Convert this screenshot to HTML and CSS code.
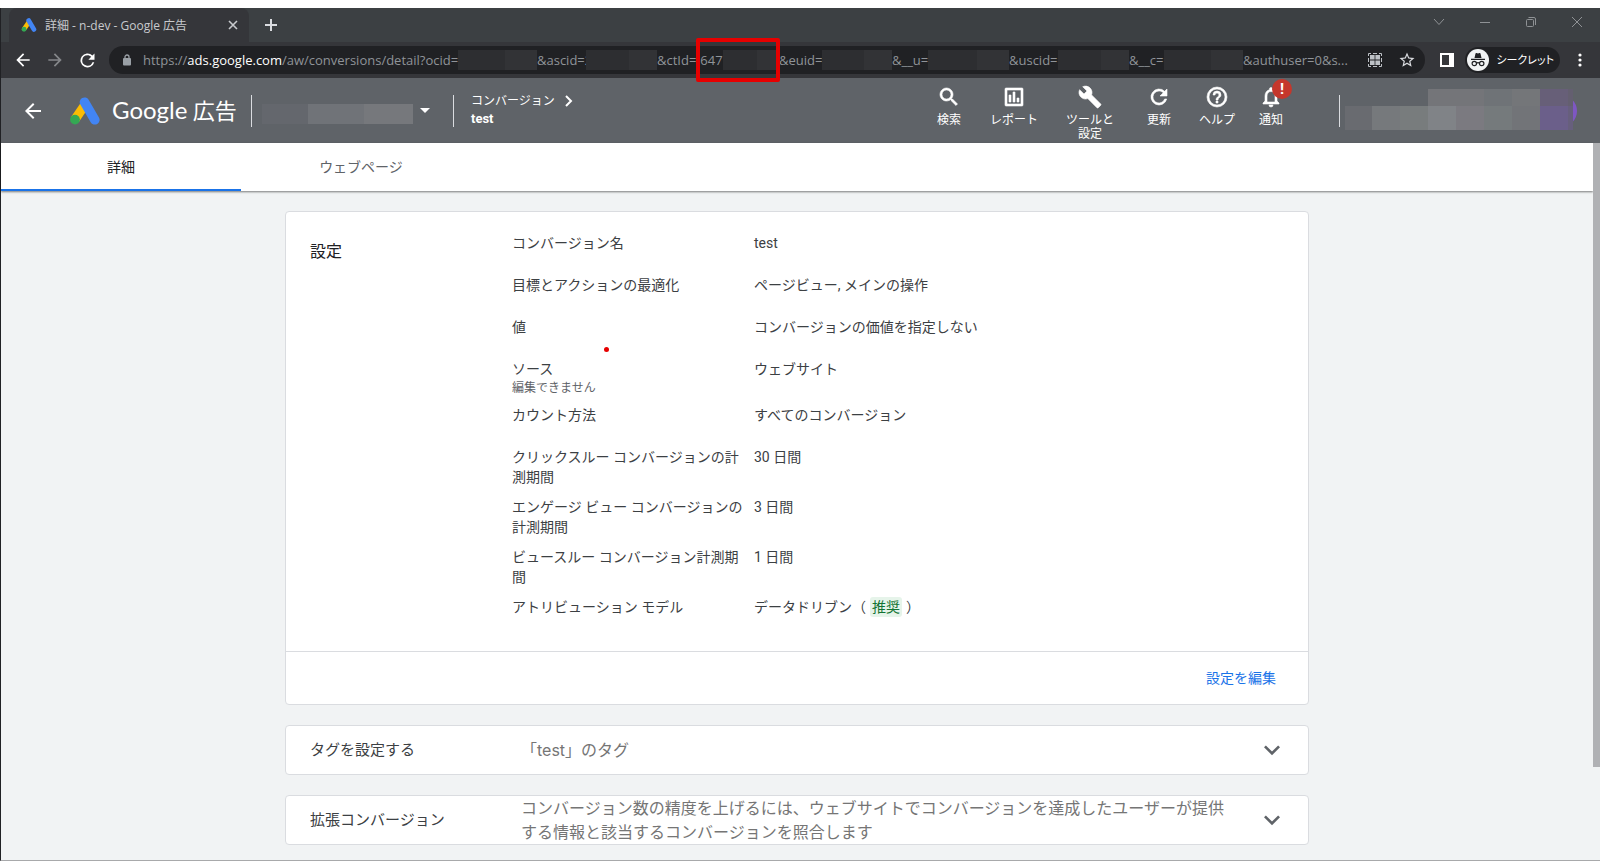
FILE: index.html
```html
<!DOCTYPE html>
<html lang="ja">
<head>
<meta charset="utf-8">
<title>詳細 - n-dev - Google 広告</title>
<link rel="stylesheet" href="styles.css">
</head>
<body>
<svg class="defs" aria-hidden="true">
  <symbol id="ads" viewBox="0 0 30 28">
    <path d="M11 5.500 19 10 9.200 24.500 1 20z" fill="#fbbc04"/>
    <path d="M14.500 5.200 24.800 22.800" stroke="#4285f4" stroke-width="9.600" stroke-linecap="round"/>
    <circle cx="5" cy="22.600" r="4.900" fill="#34a853"/>
  </symbol>
  <symbol id="back" viewBox="0 0 24 24"><path d="M20 11H7.830l5.590-5.590L12 4l-8 8 8 8 1.410-1.410L7.830 13H20z"/></symbol>
  <symbol id="reload" viewBox="0 0 24 24"><path d="M17.650 6.350A8 8 0 1 0 19.730 14h-2.080A6 6 0 1 1 12 6c1.660 0 3.140.690 4.220 1.780L13 11h7V4z"/></symbol>
  <symbol id="down" viewBox="0 0 24 24"><path d="M7.410 8.590 12 13.170l4.590-4.580L18 10l-6 6-6-6z"/></symbol>
</svg>
<div class="window">
  <div class="tabstrip">
    <div class="browser-tab">
      <svg class="favicon"><use href="#ads"/></svg>
      <span class="browser-tab-title">詳細 - n-dev - Google 広告</span>
      <button class="icon-button" aria-label="タブを閉じる"><svg width="10" height="10" viewBox="0 0 10 10"><path d="M1 1l8 8M9 1L1 9" stroke="#c8cacd" stroke-width="1.600"/></svg></button>
    </div>
    <button class="icon-button new-tab" aria-label="新しいタブ"><svg width="12" height="12" viewBox="0 0 12 12"><path d="M6 0v12M0 6h12" stroke="#dadce0" stroke-width="2"/></svg></button>
    <div class="window-controls">
      <button class="icon-button" aria-label="タブを検索"><svg width="12" height="12" viewBox="0 0 12 12"><path d="M1 3l5 5.500L11 3"/></svg></button>
      <button class="icon-button" aria-label="最小化"><svg width="12" height="12" viewBox="0 0 12 12"><path d="M1 6.500h10"/></svg></button>
      <button class="icon-button" aria-label="元に戻す"><svg width="12" height="12" viewBox="0 0 12 12"><rect x="1.500" y="3.500" width="7" height="7" rx="1"/><path d="M3.500 1.500H9a1.500 1.500 0 0 1 1.500 1.500v6"/></svg></button>
      <button class="icon-button" aria-label="閉じる"><svg width="12" height="12" viewBox="0 0 12 12"><path d="M1 1l10 10M11 1L1 11"/></svg></button>
    </div>
  </div>

  <div class="toolbar">
    <div class="history">
      <button class="icon-button" aria-label="戻る"><svg width="20" height="20"><use href="#back"/></svg></button>
      <button class="icon-button forward" aria-label="進む"><svg width="20" height="20"><use href="#back"/></svg></button>
      <button class="icon-button" aria-label="再読み込み"><svg width="21" height="21"><use href="#reload"/></svg></button>
    </div>
    <div class="omnibox">
      <svg class="lock" width="10" height="13" viewBox="0 0 10 13"><rect x="1" y="4" width="8" height="7.500" rx="1"/><path d="M3 5V3a2 2 0 0 1 4 0v2" fill="none" stroke="#9aa0a6" stroke-width="1.300"/></svg>
      <div class="url">
        <span class="part part-host"><span>https://<b>ads.google.com</b>/aw/conversions/detail?ocid=</span><i class="mask"></i></span>
        <span class="part part-ascid"><span>&amp;ascid=2</span><i class="mask mask-over"></i></span>
        <span class="part part-ctid"><span>&amp;ctId=</span><span class="ctid-value">647</span><i class="mask"></i><i class="callout"></i></span>
        <span class="part part-euid"><span>&amp;euid=</span><i class="mask"></i></span>
        <span class="part part-u"><span>&amp;__u=</span><i class="mask"></i></span>
        <span class="part part-uscid"><span>&amp;uscid=</span><i class="mask"></i></span>
        <span class="part part-c"><span>&amp;__c=</span><i class="mask"></i></span>
        <span class="part">&amp;authuser=0&amp;s...</span>
      </div>
      <button class="icon-button" aria-label="QR コード"><svg width="14" height="14" viewBox="0 0 14 14"><path d="M.5 3V.5H3M5 .5h4M11 .5h2.500V3M13.500 5v4M13.500 11v2.500H11M9 13.500H5M3 13.500H.5V11M.5 9V5" fill="none" stroke="#bdc1c6"/><path d="M2 2h4.600v4.600H2zM7.400 2H12v4.600H7.400zM2 7.400h4.600V12H2zM7.400 7.400H12V12H7.400z" fill="#bdc1c6"/></svg></button>
      <button class="icon-button" aria-label="ブックマーク"><svg width="18" height="18" viewBox="0 0 24 24" fill="#dadce0"><path d="M22 9.240l-7.190-.620L12 2 9.190 8.630 2 9.240l5.460 4.730L5.820 21 12 17.270 18.180 21l-1.630-7.030zM12 15.400l-3.760 2.270 1-4.280-3.320-2.880 4.380-.380L12 6.100l1.710 4.040 4.380.380-3.320 2.880 1 4.280z"/></svg></button>
    </div>
    <button class="icon-button side-panel" aria-label="サイドパネル"><svg width="14" height="14" viewBox="0 0 14 14"><path fill="#fff" fill-rule="evenodd" d="M0 0h14v14H0zM2 2v10h7V2z"/></svg></button>
    <button class="incognito">
      <svg width="22" height="22" viewBox="0 0 22 22"><circle cx="11" cy="11" r="11" fill="#f1f3f4"/><g fill="#202124"><path d="M7.500 9l1-4.500q.3-.7 1-.4L11 4.600l1.500-.5q.7-.3 1 .4l1 4.500zM4 9.800h14V11H4z"/></g><g fill="none" stroke="#202124" stroke-width="1.200"><circle cx="7.300" cy="14.500" r="2.200"/><circle cx="14.700" cy="14.500" r="2.200"/><path d="M9.500 14.200q1.500-1 3 0"/></g></svg>
      <span>シークレット</span>
    </button>
    <button class="icon-button menu" aria-label="メニュー"><svg width="4" height="14" viewBox="0 0 4 14" fill="#fff"><circle cx="2" cy="2" r="1.600"/><circle cx="2" cy="7" r="1.600"/><circle cx="2" cy="12" r="1.600"/></svg></button>
  </div>

  <header class="app-bar">
    <button class="icon-button app-back" aria-label="戻る"><svg width="24" height="24"><use href="#back"/></svg></button>
    <svg class="logo"><use href="#ads"/></svg>
    <div class="brand"><span class="brand-name">Google</span> 広告</div>
    <i class="divider"></i>
    <button class="account-picker" aria-label="アカウント"><i class="account-mask"></i><svg width="10" height="5" viewBox="0 0 10 5"><path d="M0 0h10L5 5z" fill="#fff"/></svg></button>
    <i class="divider"></i>
    <nav class="breadcrumb">
      <a href="#">コンバージョン<svg width="8" height="12" viewBox="0 0 8 12"><path d="M1 1l5 5-5 5" fill="none" stroke="#fff" stroke-width="2"/></svg></a>
      <strong>test</strong>
    </nav>
    <div class="tools">
      <button class="tool"><svg width="24" height="24" viewBox="0 0 24 24"><path d="M15.500 14h-.790l-.280-.270a6.500 6.500 0 1 0-.700.700l.270.280v.790l5 4.990L20.490 19zm-6 0a4.500 4.500 0 1 1 0-9 4.500 4.500 0 0 1 0 9z"/></svg><span>検索</span></button>
      <button class="tool"><svg width="24" height="24" viewBox="0 0 24 24"><path fill-rule="evenodd" d="M4 3h16q1 0 1 1v16q0 1-1 1H4q-1 0-1-1V4q0-1 1-1zM5 5v14h14V5zM7 10h2v7H7zM11 7h2v10h-2zM15 13h2v4h-2z"/></svg><span>レポート</span></button>
      <button class="tool"><svg width="24" height="24" viewBox="0 0 24 24"><path d="M22.700 19l-9.100-9.100c.9-2.300.4-5-1.500-6.900-2-2-5-2.400-7.400-1.300L9 6 6 9 1.600 4.700C.4 7.100.9 10.100 2.900 12.100c1.900 1.900 4.600 2.400 6.900 1.500l9.100 9.100c.4.4 1 .4 1.400 0l2.300-2.300c.5-.4.5-1.100.1-1.400z"/></svg><span>ツールと<br>設定</span></button>
      <button class="tool"><svg width="24" height="24"><use href="#reload"/></svg><span>更新</span></button>
      <button class="tool"><svg width="24" height="24" viewBox="0 0 24 24"><path d="M11 18h2v-2h-2zm1-16a10 10 0 1 0 0 20 10 10 0 0 0 0-20zm0 18a8 8 0 1 1 0-16 8 8 0 0 1 0 16zm0-14a4 4 0 0 0-4 4h2a2 2 0 1 1 4 0c0 2-3 1.750-3 5h2c0-2.250 3-2.500 3-5a4 4 0 0 0-4-4z"/></svg><span>ヘルプ</span></button>
      <button class="tool"><svg width="24" height="24" viewBox="0 0 24 24"><path d="M12 22a2 2 0 0 0 2-2h-4a2 2 0 0 0 2 2zm6-6v-5c0-3.070-1.630-5.640-4.500-6.320V4a1.500 1.500 0 0 0-3 0v.680C7.640 5.360 6 7.920 6 11v5l-2 2v1h16v-1zm-2 1H8v-6c0-2.480 1.510-4.500 4-4.500s4 2.020 4 4.500z"/></svg><span>通知</span><b class="badge">!</b></button>
    </div>
    <i class="divider profile-divider"></i>
    <svg class="profile" width="232" height="42" viewBox="0 0 232 42">
      <circle cx="216" cy="22" r="16" fill="#7e57c2"/>
      <path fill="#747579" d="M83 0h56v17H83z"/><path fill="#6f7377" d="M139 0h28v17h-28z"/><path fill="#747679" d="M167 0h28v17h-28z"/><path fill="#675f78" d="M195 0h28v17h-28z"/><path fill="#645f70" d="M223 0h5v17h-5z"/>
      <path fill="#696b70" d="M0 17h27v24H0z"/><path fill="#76797c" d="M27 17h28v24H27z"/><path fill="#787c7d" d="M55 17h28v24H55z"/><path fill="#808387" d="M83 17h28v24H83z"/><path fill="#7b7a80" d="M111 17h28v24h-28z"/><path fill="#757a7c" d="M139 17h28v24h-28z"/><path fill="#727478" d="M167 17h28v24h-28z"/><path fill="#6b5f8a" d="M195 17h28v24h-28z"/><path fill="#675f7d" d="M223 17h5v24h-5z"/>
    </svg>
  </header>

  <div class="viewport">
    <div class="page">
      <nav class="tabs">
        <a class="tab tab-active" href="#">詳細</a>
        <a class="tab" href="#">ウェブページ</a>
      </nav>
      <main class="content">
        <section class="card">
          <div class="settings">
            <h2 class="settings-title">設定</h2>
            <dl class="fields">
              <div class="field"><dt>コンバージョン名</dt><dd>test</dd></div>
              <div class="field"><dt>目標とアクションの最適化</dt><dd>ページビュー, メインの操作</dd></div>
              <div class="field"><dt>値<i class="marker"></i></dt><dd>コンバージョンの価値を指定しない</dd></div>
              <div class="field"><dt>ソース<small>編集できません</small></dt><dd>ウェブサイト</dd></div>
              <div class="field"><dt>カウント方法</dt><dd>すべてのコンバージョン</dd></div>
              <div class="field"><dt>クリックスルー コンバージョンの計測期間</dt><dd>30 日間</dd></div>
              <div class="field"><dt>エンゲージ ビュー コンバージョンの計測期間</dt><dd>3 日間</dd></div>
              <div class="field"><dt>ビュースルー コンバージョン計測期間</dt><dd>1 日間</dd></div>
              <div class="field"><dt>アトリビューション モデル</dt><dd>データドリブン（<span class="chip">推奨</span>）</dd></div>
            </dl>
          </div>
          <div class="card-actions"><button class="link-button">設定を編集</button></div>
        </section>
        <section class="card expander">
          <h2 class="expander-title">タグを設定する</h2>
          <p class="expander-text">「test」のタグ</p>
          <button class="icon-button" aria-label="タグを設定するを開く"><svg width="32" height="32"><use href="#down"/></svg></button>
        </section>
        <section class="card expander">
          <h2 class="expander-title">拡張コンバージョン</h2>
          <p class="expander-text">コンバージョン数の精度を上げるには、ウェブサイトでコンバージョンを達成したユーザーが提供する情報と該当するコンバージョンを照合します</p>
          <button class="icon-button" aria-label="拡張コンバージョンを開く"><svg width="32" height="32"><use href="#down"/></svg></button>
        </section>
      </main>
    </div>
    <div class="scrollbar"><div class="scrollbar-thumb"></div></div>
  </div>
</div>
</body>
</html>
```

FILE: styles.css
```css
* { box-sizing: border-box; }

body {
  margin: 0;
  padding-top: 8px;
  min-height: 100vh;
  display: flex;
  background: #fff;
  color: #3c4043;
  font: 14px/20px Roboto, "Noto Sans CJK JP", sans-serif;
}

h2, p, dl, dd { margin: 0; font-weight: 400; }
a { color: inherit; text-decoration: none; }
button { border: 0; padding: 0; background: none; color: inherit; font: inherit; }
svg { display: block; flex: none; }
.defs { position: absolute; width: 0; height: 0; }

.window {
  flex: 1;
  min-width: 0;
  display: flex;
  flex-direction: column;
  border-left: 1px solid #202124;
  border-bottom: 1px solid #a8a9ab;
}

.icon-button {
  flex: none;
  width: 32px;
  height: 28px;
  display: flex;
  align-items: center;
  justify-content: center;
}

/* Browser chrome */
.tabstrip {
  display: flex;
  align-items: center;
  height: 34px;
  padding-left: 8px;
  background: #3c4043;
  font: 12px/16px "Open Sans", "Noto Sans CJK JP", sans-serif;
}
.browser-tab {
  width: 240px;
  height: 34px;
  padding-left: 12px;
  display: flex;
  align-items: center;
  border-radius: 8px 8px 0 0;
  background: #35363a;
  color: #c8cacd;
}
.favicon { width: 16px; height: 14px; margin-right: 8px; }
.browser-tab-title { flex: 1; padding-top: 2px; white-space: nowrap; }
.new-tab { margin-left: 6px; }
.window-controls {
  margin-left: auto;
  display: flex;
  height: 34px;
}
.window-controls .icon-button { width: 46px; }
.window-controls svg { fill: none; stroke: #8f9295; }

.toolbar {
  display: flex;
  align-items: center;
  height: 36px;
  background: #35363a;
  color: #fff;
  font: 13px/20px "Open Sans", "Noto Sans CJK JP", sans-serif;
}
.history { display: flex; padding: 0 6px; fill: #fff; }
.forward { fill: #85878a; transform: scaleX(-1); }
.omnibox {
  flex: 1;
  min-width: 0;
  height: 28px;
  padding: 0 2px 0 13px;
  display: flex;
  align-items: center;
  border-radius: 14px;
  background: #202124;
}
.lock { fill: #9aa0a6; margin-right: 11px; }
.url {
  flex: 1;
  min-width: 0;
  display: flex;
  color: #8f9398;
  white-space: nowrap;
}
.url b { color: #fff; font-weight: 400; }
.part { position: relative; display: flex; align-items: center; flex: none; }
.part-host { width: 394px; }
.part-ascid { width: 120px; }
.part-ctid { width: 122px; }
.part-euid { width: 113px; }
.part-u { width: 117px; }
.part-uscid { width: 120px; }
.part-c { width: 114px; }
.ctid-value { margin-left: 4px; }
.mask {
  flex: 1;
  height: 20px;
  background: linear-gradient(90deg, #2d2e31 60%, #323336 60%);
}
.mask-over { position: relative; margin-left: -6px; }
.callout {
  position: absolute;
  top: -12px;
  left: 39px;
  width: 84px;
  height: 44px;
  border: 4px solid #e60000;
  border-radius: 2px;
  z-index: 1;
}
.side-panel { margin-left: 6px; }
.incognito {
  flex: none;
  height: 26px;
  margin-left: 2px;
  padding: 0 6px 0 2px;
  display: flex;
  align-items: center;
  gap: 7px;
  border-radius: 13px;
  background: #202124;
  font-size: 11px;
  line-height: 16px;
  font-feature-settings: "palt";
}
.incognito span { min-width: 56px; white-space: nowrap; }
.menu { width: 40px; }

/* Application header */
.app-bar {
  display: flex;
  align-items: center;
  min-height: 65px;
  padding-right: 23px;
  background: #5f6368;
  color: #fff;
  fill: #fff;
}
.app-back { width: 64px; }
.logo { width: 30px; height: 28px; margin: 0 12px 0 5px; }
.brand { width: 139px; font-size: 22px; line-height: 32px; white-space: nowrap; }
.brand-name { font-family: Lato, sans-serif; font-size: 24px; }
.divider { flex: none; width: 1px; height: 32px; background: #dadce0; }
.account-picker { width: 201px; padding-left: 10px; display: flex; align-items: center; gap: 7px; }
.account-mask {
  width: 151px;
  height: 20px;
  margin-top: 6px;
  background: linear-gradient(90deg, #64676d 46px, #707378 46px 102px, #76787c 102px);
}
.breadcrumb {
  padding: 0 0 2px 17px;
  display: flex;
  flex-direction: column;
  font-size: 12px;
  line-height: 18px;
}
.breadcrumb a { display: flex; align-items: center; gap: 10px; }
.breadcrumb strong { font-size: 13px; }
.tools {
  margin-left: auto;
  display: grid;
  grid-template-columns: 66px 64px 88px 50px 66px 42px;
  align-self: flex-start;
  padding-top: 7px;
  font-size: 12px;
  line-height: 14px;
}
.tool {
  position: relative;
  display: flex;
  flex-direction: column;
  align-items: center;
  gap: 4px;
}
.tool svg { stroke: #fff; stroke-width: 0.6; }
.badge {
  position: absolute;
  top: -6px;
  right: 0;
  width: 20px;
  height: 20px;
  border-radius: 50%;
  background: #c5372c;
  font-size: 15px;
  line-height: 20px;
  text-align: center;
}
.profile-divider { margin: 0 5px 0 47px; }
.profile { margin-bottom: 2px; }

/* Page */
.viewport { flex: 1; display: flex; background: #f1f3f4; }
.page { flex: 1; min-width: 0; }
.scrollbar { width: 7px; }
.scrollbar-thumb { height: 87%; background: #b0b1b4; }

.tabs {
  display: flex;
  background: #fff;
  box-shadow: 0 1px 2px rgba(0, 0, 0, 0.5);
}
.tab {
  width: 240px;
  height: 48px;
  padding-top: 14px;
  text-align: center;
  color: #5f6368;
}
.tab-active { color: #202124; border-bottom: 2px solid #1a73e8; }

.content {
  max-width: 1024px;
  margin: 0 auto;
  padding: 20px 0 14px;
  display: flex;
  flex-direction: column;
  gap: 20px;
}
.card { background: #fff; border: 1px solid #dadce0; border-radius: 4px; }
.settings { display: flex; padding: 21px 24px 12px; }
.settings-title {
  width: 202px;
  padding-top: 7px;
  color: #202124;
  font-size: 16px;
  line-height: 24px;
}
.fields { flex: 1; }
.field {
  display: grid;
  grid-template-columns: 242px 1fr;
  min-height: 42px;
  padding-bottom: 10px;
}
.field dt { position: relative; padding-right: 4px; }
.field small {
  display: block;
  margin-bottom: -2px;
  font-size: 12px;
  line-height: 18px;
  color: #5f6368;
}
.marker {
  position: absolute;
  top: 30px;
  left: 92px;
  width: 5px;
  height: 5px;
  border-radius: 50%;
  background: #e60000;
}
.chip { margin: 0 4px; padding: 2px; border-radius: 3px; background: #e6f4ea; color: #137333; }
.card-actions {
  display: flex;
  justify-content: flex-end;
  padding: 16px 32px;
  border-top: 1px solid #dadce0;
}
.link-button { color: #1a73e8; }

.expander {
  display: flex;
  align-items: center;
  padding: 0 20px 0 24px;
}
.expander-title { width: 211px; font-size: 15px; line-height: 24px; }
.expander-text {
  flex: 1;
  padding-right: 24px;
  color: #757575;
  font: 16px/24px Inter, "Noto Sans CJK JP", sans-serif;
}
.expander .icon-button { height: 48px; fill: #5f6368; }
```
